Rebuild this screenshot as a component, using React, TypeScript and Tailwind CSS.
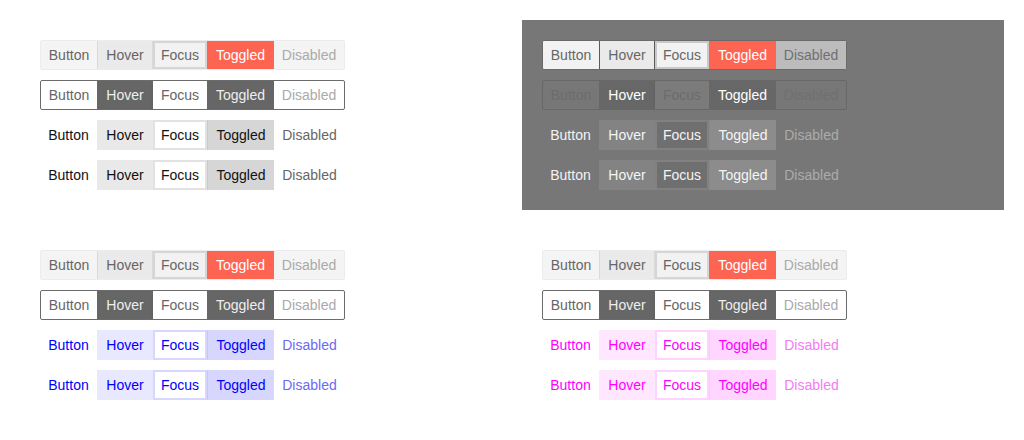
import React from "react";

type Cls = { base: string; btn: string; hover: string; focus: string; tog: string; dis: string };

const labels = ["Button", "Hover", "Focus", "Toggled", "Disabled"];

function Group({ c }: { c: Cls }) {
  const k = [c.btn, c.hover, c.focus, c.tog, c.dis];
  return (
    <div className={"flex w-fit h-[30px] text-[14px] leading-none " + c.base}>
      {labels.map((l, i) => (
        <div key={l} className={"flex items-center justify-center px-2 " + k[i]}>
          {l}
        </div>
      ))}
    </div>
  );
}

const defLight: Cls = {
  base: "rounded-[2px] border border-[#ececec] bg-[#f4f4f4]",
  btn: "text-[#666] w-[56px]",
  hover: "text-[#666] bg-[#eaeaea] border-x border-[#dadada] w-[56px]",
  focus: "text-[#666] bg-[#f2f2f2] border-2 border-[#d6d6d6] w-[54px]",
  tog: "text-white bg-[#fe6452] w-[67px]",
  dis: "text-[#aaa] w-[70px]",
};
const outLight: Cls = {
  base: "rounded-[2px] border border-[#6b6b6b] bg-white overflow-hidden",
  btn: "text-[#666] w-[56px]",
  hover: "text-[#eee] bg-[#666] w-[56px]",
  focus: "text-[#666] bg-white w-[54px] shadow-[0_2px_4px_rgba(0,0,0,0.08)]",
  tog: "text-[#eee] bg-[#666] w-[67px]",
  dis: "text-[#aaa] w-[70px]",
};
const flat = (t: string, h: string, fb: string, fbg: string, tg: string, tb: string, d: string): Cls => ({
  base: "",
  btn: `${t} w-[57px]`,
  hover: `${t} ${h} w-[56px]`,
  focus: `${t} ${fbg} border-2 ${fb} w-[54px]`,
  tog: `${t} ${tg} border-l ${tb} w-[67px]`,
  dis: `${d} w-[71px]`,
});
const flatGray = flat("text-[#111]", "bg-[#e9e9e9]", "border-[#e2e2e2]", "bg-white", "bg-[#d6d6d6]", "border-[#cacaca]", "text-[#666]");
const flatBlue = flat("text-[#0000ff]", "bg-[#e8e8ff]", "border-[#d6d6ff]", "bg-white", "bg-[#d6d6ff]", "border-[#c6c6ff]", "text-[#6a6af5]");
const flatPink = flat("text-[#ff00ff]", "bg-[#ffe8ff]", "border-[#ffd2ff]", "bg-white", "bg-[#ffd6ff]", "border-[#ffc6ff]", "text-[#f57af5]");

const defDark: Cls = {
  base: "rounded-[2px] border border-[#6a6a6a] bg-[#f2f2f2]",
  btn: "text-[#666] w-[56px]",
  hover: "text-[#666] bg-[#eaeaea] border-x border-[#5a5a5a] w-[56px]",
  focus: "text-[#666] bg-[#f2f2f2] border-2 border-[#c9c9c9] w-[54px]",
  tog: "text-white bg-[#fe6452] w-[67px]",
  dis: "text-[#707070] bg-[#bcbcbc] w-[70px]",
};
const outDark: Cls = {
  base: "rounded-[2px] border border-[#686868] overflow-hidden",
  btn: "text-[#6c6c6c] w-[56px]",
  hover: "text-white bg-[#676767] w-[56px]",
  focus: "text-[#6c6c6c] bg-[#7b7b7b] w-[54px] shadow-[0_2px_4px_rgba(0,0,0,0.08)]",
  tog: "text-white bg-[#676767] w-[67px]",
  dis: "text-[#707070] w-[70px]",
};
const flatDark = flat("text-[#f4f4f4]", "bg-[#838383]", "border-[#818181]", "bg-[#6f6f6f]", "bg-[#8c8c8c]", "border-[#888]", "text-[#acacac]");

function Panel({ rows, dark }: { rows: Cls[]; dark?: boolean }) {
  return (
    <div className={"p-5 flex flex-col gap-[10px] h-[190px] " + (dark ? "bg-[#777]" : "bg-white")}>
      {rows.map((r, i) => (
        <Group key={i} c={r} />
      ))}
    </div>
  );
}

export default function App() {
  return (
    <div
      className="w-[1024px] h-[440px] bg-white p-5 grid grid-cols-2 gap-5 content-start"
      style={{ fontFamily: '"Liberation Sans", Arial, sans-serif' }}
    >
      <Panel rows={[defLight, outLight, flatGray, flatGray]} />
      <Panel dark rows={[defDark, outDark, flatDark, flatDark]} />
      <Panel rows={[defLight, outLight, flatBlue, flatBlue]} />
      <Panel rows={[defLight, outLight, flatPink, flatPink]} />
    </div>
  );
}
